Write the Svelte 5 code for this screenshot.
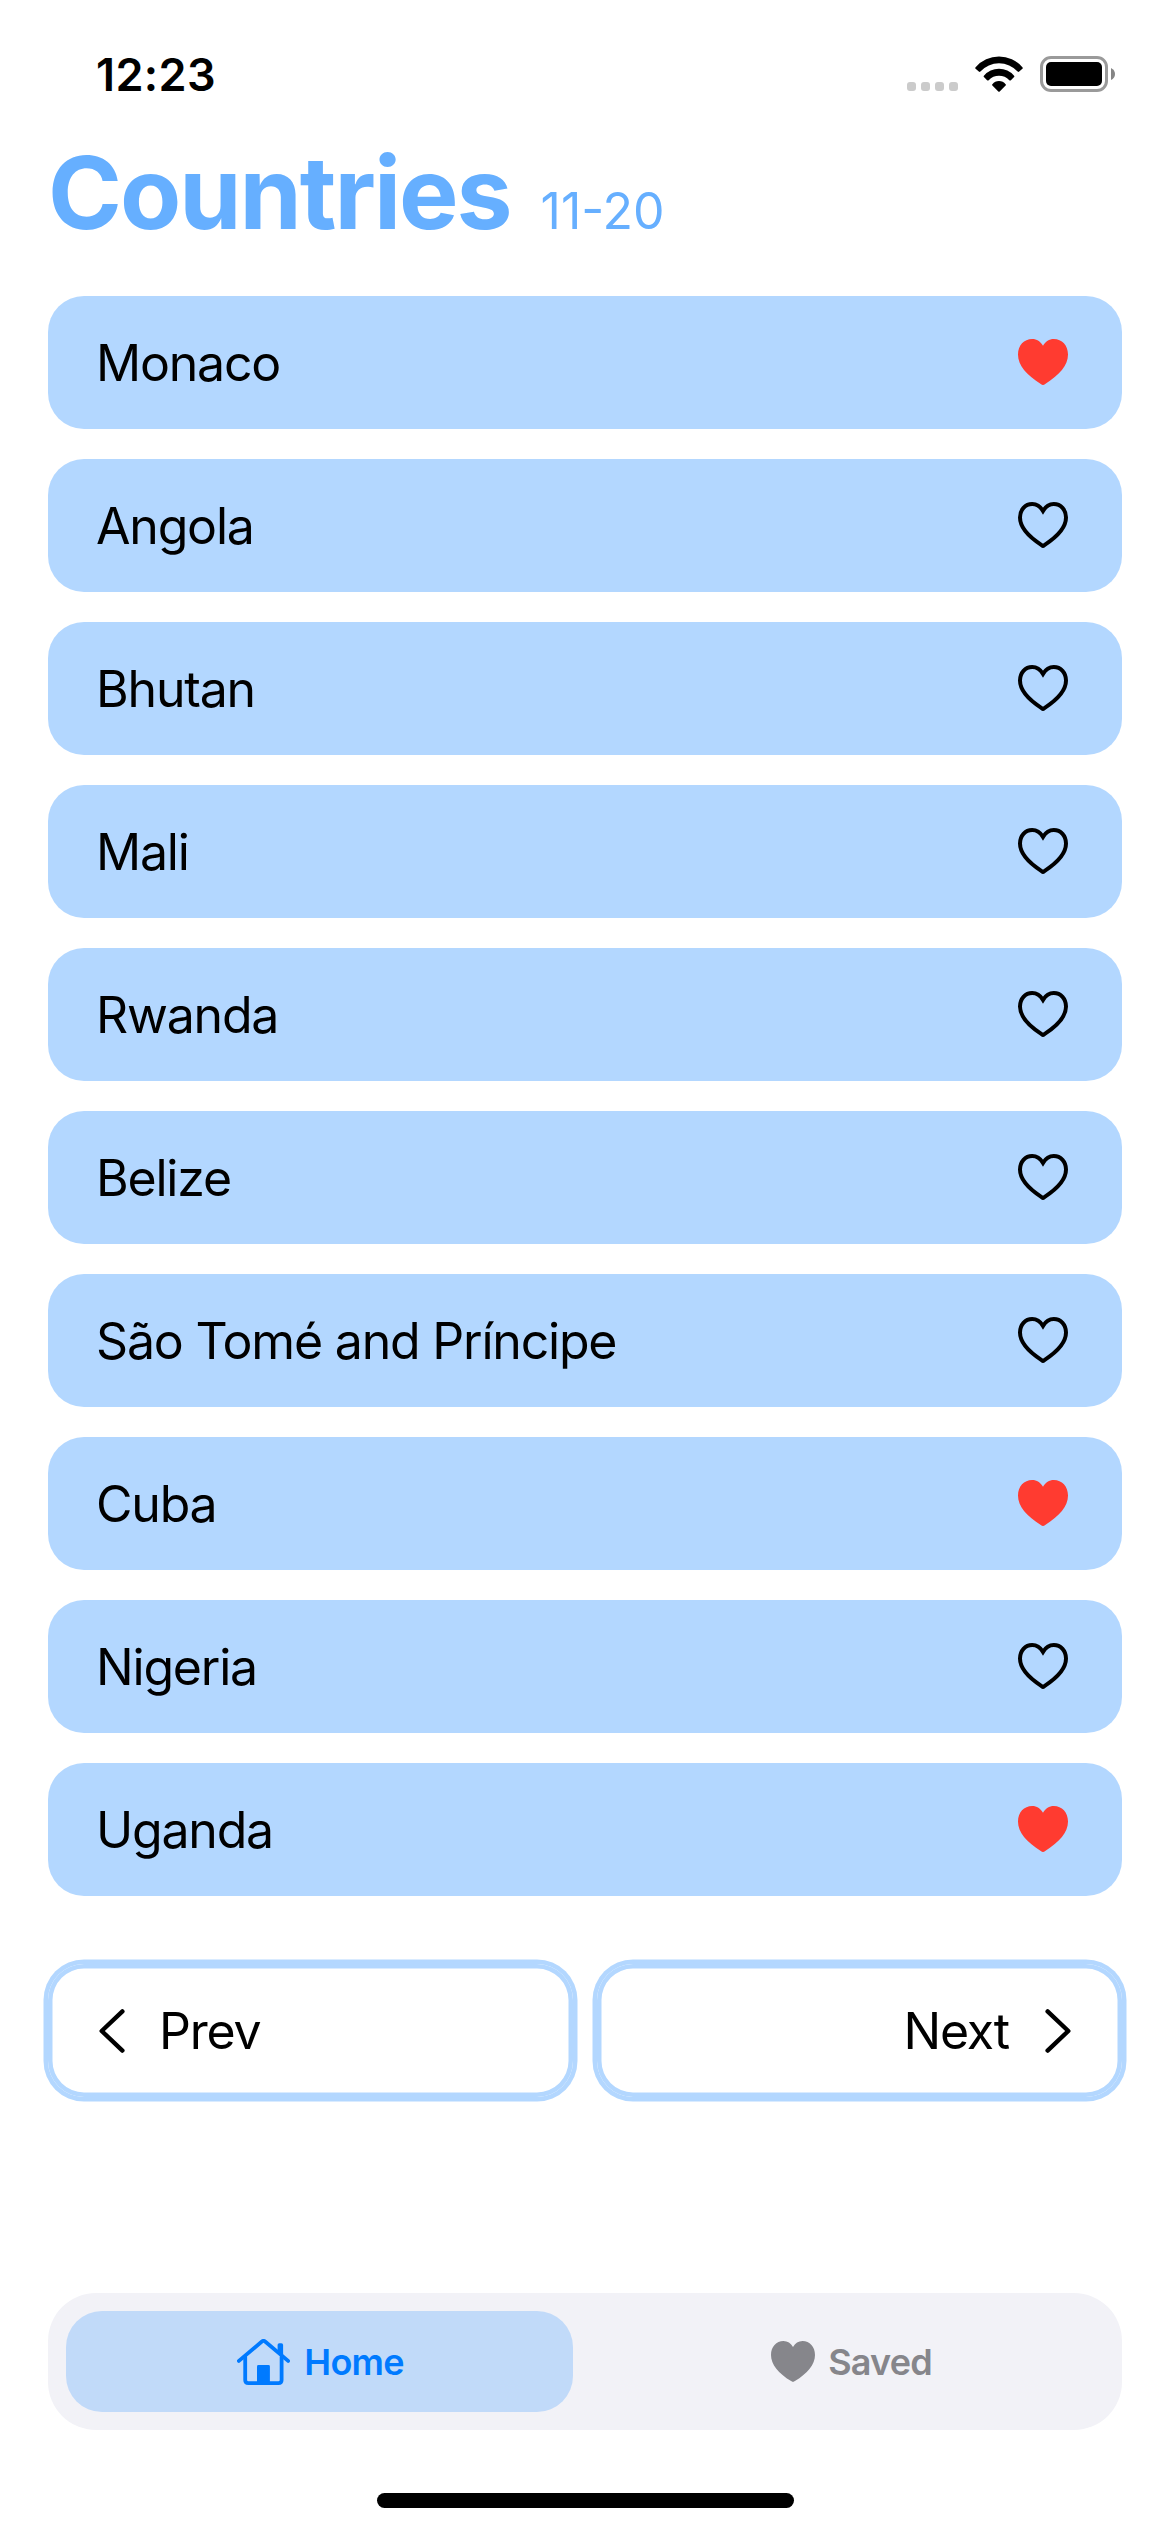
<script>
  const countries = $state([
    { name: 'Monaco', saved: true },
    { name: 'Angola', saved: false },
    { name: 'Bhutan', saved: false },
    { name: 'Mali', saved: false },
    { name: 'Rwanda', saved: false },
    { name: 'Belize', saved: false },
    { name: 'São Tomé and Príncipe', saved: false },
    { name: 'Cuba', saved: true },
    { name: 'Nigeria', saved: false },
    { name: 'Uganda', saved: true }
  ]);
</script>

<div class="screen">
  <header class="status">
    <span class="time">12:23</span>
    <div class="indicators">
      <div class="dots"><i></i><i></i><i></i><i></i></div>
      <svg class="wifi" width="48" height="36" viewBox="0 0 48 36">
        <path d="M0.6 11.2 A31 31 0 0 1 47.4 11.2 Q48.2 12 47.4 12.8 L44.2 15.6 Q43.4 16.2 42.6 15.5 A25.2 25.2 0 0 0 5.4 15.5 Q4.6 16.2 3.8 15.6 L0.6 12.8 Q-0.2 12 0.6 11.2Z" />
        <path d="M8.9 19.7 A19.8 19.8 0 0 1 39.1 19.7 Q39.8 20.4 39.1 21.1 L35.9 24.2 Q35.1 24.9 34.3 24.2 A14 14 0 0 0 13.7 24.2 Q12.9 24.9 12.1 24.2 L8.9 21.1 Q8.2 20.4 8.9 19.7Z" />
        <path d="M17.4 28.2 A8.4 8.4 0 0 1 30.6 28.2 Q31.3 28.9 30.6 29.6 L24.7 35.5 Q24 36.2 23.3 35.5 L17.4 29.6 Q16.7 28.9 17.4 28.2Z" />
      </svg>
      <svg class="battery" width="75" height="36" viewBox="0 0 75 36">
        <rect x="1.5" y="1.5" width="65" height="33" rx="9.5" fill="none" stroke="#9a9a9a" stroke-width="3" />
        <rect x="6" y="6" width="56" height="24" rx="5" />
        <path d="M71 12 Q75 14 75 18 Q75 22 71 24Z" fill="#858585" />
      </svg>
    </div>
  </header>

  <div class="heading">
    <h1>Countries</h1>
    <span class="range">11-20</span>
  </div>

  <ul class="list">
    {#each countries as country}
      <li class="row">
        <span class="label">{country.name}</span>
        <button class="heart" class:saved={country.saved} aria-label="Save" onclick={() => (country.saved = !country.saved)}>
          <svg width="50" height="46" viewBox="0 0 50 46">
            {#if country.saved}
              <path d="M25 46 C24.3 46 23.6 45.5 22.8 45 C8.5 36 0 26.4 0 15.6 C0 6.4 6 0 14.2 0 C18.8 0 22.6 2.5 25 6.8 C27.4 2.5 31.2 0 35.8 0 C44 0 50 6.4 50 15.6 C50 26.4 41.5 36 27.2 45 C26.4 45.5 25.7 46 25 46Z" />
            {:else}
              <path class="outline" d="M25 43.9 C24.7 43.9 24 43.4 23.6 43.1 C9.8 34.2 2 25.2 2 15.6 C2 7.6 7.2 2 14.2 2 C19.2 2 22.6 4.9 25 8.9 C27.4 4.9 30.8 2 35.8 2 C42.8 2 48 7.6 48 15.6 C48 25.2 40.2 34.2 26.4 43.1 C26 43.4 25.3 43.9 25 43.9Z" />
            {/if}
          </svg>
        </button>
      </li>
    {/each}
  </ul>

  <div class="pager">
    <button class="page prev">
      <svg width="26" height="44" viewBox="0 0 26 44"><path d="M23.4 2.4 L2.7 22 L23.4 41.6" /></svg>
      <span class="label">Prev</span>
    </button>
    <button class="page next">
      <span class="label">Next</span>
      <svg width="26" height="44" viewBox="0 0 26 44"><path d="M2.6 2.4 L23.3 22 L2.6 41.6" /></svg>
    </button>
  </div>

  <nav class="tabs">
    <button class="tab active">
      <svg width="54" height="46" viewBox="0 0 54 46">
        <path class="line" d="M1.9 21.9 L24.9 2.5 Q26.5 1.3 28.1 2.5 L51.1 21.9" />
        <path class="line" d="M8.2 18 V41 Q8.2 44.1 11.4 44.1 H41.4 Q44.6 44.1 44.6 41 V18" />
        <path d="M40.6 13.5 V6 Q40.6 4.3 42.3 4.3 H44.4 Q46.1 4.3 46.1 6 V18.4Z" />
        <path d="M20 45 V27.4 Q20 26 21.4 26 H31.5 Q32.9 26 32.9 27.4 V45Z" />
      </svg>
      <span>Home</span>
    </button>
    <button class="tab">
      <svg width="44" height="41" viewBox="0 0 50 46" preserveAspectRatio="none">
        <path d="M25 46 C24.3 46 23.6 45.5 22.8 45 C8.5 36 0 26.4 0 15.6 C0 6.4 6 0 14.2 0 C18.8 0 22.6 2.5 25 6.8 C27.4 2.5 31.2 0 35.8 0 C44 0 50 6.4 50 15.6 C50 26.4 41.5 36 27.2 45 C26.4 45.5 25.7 46 25 46Z" />
      </svg>
      <span>Saved</span>
    </button>
  </nav>
  <div class="home-indicator"></div>
</div>

<style>
  :global(body) {
    background: #fff;
  }
  .screen {
    box-sizing: border-box;
    width: 1170px;
    height: 2532px;
    display: flex;
    flex-direction: column;
    background: #fff;
    color: #000;
    font-family: Inter, 'Liberation Sans', sans-serif;
    overflow: hidden;
  }
  button {
    font: inherit;
    color: inherit;
    background: none;
    border: 0;
    margin: 0;
    padding: 0;
  }
  svg {
    display: block;
    flex: none;
  }
  .status {
    height: 141px;
    flex: none;
    box-sizing: border-box;
    padding: 45px 55px 0 96px;
    display: flex;
    justify-content: space-between;
    align-items: flex-start;
  }
  .time {
    font-size: 45px;
    line-height: 60px;
    font-weight: 600;
    letter-spacing: 0.4px;
  }
  .indicators {
    display: flex;
    align-items: flex-end;
    height: 47px;
  }
  .dots {
    display: flex;
    gap: 5px;
    margin: 0 17px 1px 0;
    width: 51px;
  }
  .dots i {
    width: 9px;
    height: 9px;
    border-radius: 3px;
    background: #cbcbcb;
  }
  .wifi {
    margin-right: 17px;
  }
  .heading {
    height: 155px;
    flex: none;
    box-sizing: border-box;
    padding: 0 48px;
    display: flex;
    align-items: baseline;
    gap: 30px;
    color: #66afff;
  }
  h1 {
    margin: 0;
    font-size: 100px;
    line-height: 104px;
    font-weight: 700;
    letter-spacing: -2px;
  }
  .range {
    font-size: 50px;
    line-height: 60px;
  }
  .list {
    list-style: none;
    margin: 0;
    padding: 0 48px;
    display: flex;
    flex-direction: column;
    gap: 30px;
  }
  .row {
    height: 133px;
    box-sizing: border-box;
    padding: 0 54px 0 48px;
    border-radius: 36px;
    background: #b3d7ff;
    display: flex;
    align-items: center;
    justify-content: space-between;
  }
  .label {
    font-size: 50px;
    line-height: 60px;
    letter-spacing: -1.2px;
  }
  .heart {
    color: #000;
    padding-bottom: 1px;
  }
  .heart.saved {
    color: #ff3b30;
  }
  .heart path {
    fill: currentColor;
  }
  .heart path.outline {
    fill: none;
    stroke: currentColor;
    stroke-width: 4;
  }
  .pager {
    display: grid;
    grid-template-columns: 525px 525px;
    gap: 24px;
    padding: 68px 48px 0;
  }
  .page {
    height: 133px;
    border-radius: 36px;
    box-shadow: 0 0 0 4.5px #b3d7ff, inset 0 0 0 4.5px #b3d7ff;
    display: flex;
    align-items: center;
    box-sizing: border-box;
    padding: 0 51px;
    gap: 34px;
  }
  .next {
    justify-content: flex-end;
    gap: 36px;
  }
  .page path {
    fill: none;
    stroke: currentColor;
    stroke-width: 4.4;
    stroke-linecap: round;
    stroke-linejoin: round;
  }
  .tabs {
    margin: auto 48px 0;
    height: 137px;
    flex: none;
    box-sizing: border-box;
    padding: 18px;
    border-radius: 48px;
    background: #f2f2f7;
    display: grid;
    grid-template-columns: 507px 507px;
    gap: 24px;
  }
  .tab {
    display: flex;
    align-items: center;
    justify-content: center;
    gap: 13px;
    padding-left: 2px;
    border-radius: 36px;
    color: #86868b;
    font-size: 36px;
    font-weight: 600;
    letter-spacing: -0.8px;
  }
  .tab.active {
    background: #c1daf9;
    color: #007aff;
  }
  .tab path {
    fill: currentColor;
  }
  .tab path.line {
    fill: none;
    stroke: currentColor;
    stroke-width: 3.8;
    stroke-linecap: round;
    stroke-linejoin: round;
  }
  .home-indicator {
    width: 417px;
    height: 15px;
    margin: 63px auto 24px;
    flex: none;
    border-radius: 8px;
    background: #000;
  }
</style>
